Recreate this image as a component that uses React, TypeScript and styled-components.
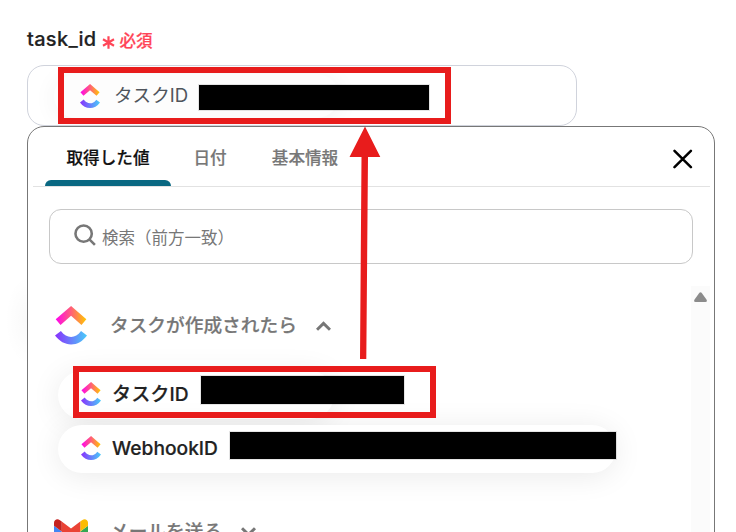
import { useId } from "react";
import styled, { createGlobalStyle } from "styled-components";

const GlobalStyle = createGlobalStyle`
    * {
        box-sizing: border-box;
    }

    body {
        margin: 0;
        background: #fff;
        font-family: Inter, "Noto Sans CJK JP", sans-serif;
    }
`

type PropsIcone = {
    size: number
}

const ClickUpIcon = ({ size }: PropsIcone) => {
    const id = useId();

    return (
        <Icone width={size} height={size * 1.2} viewBox="2 0 20 24">
            <defs>
                <linearGradient id={`${id}top`} x1="0" x2="1" y1="0" y2="0">
                    <stop offset="0" stopColor="#ff02f0" />
                    <stop offset="0.5" stopColor="#ff5f79" />
                    <stop offset="1" stopColor="#ffc800" />
                </linearGradient>
                <linearGradient id={`${id}bottom`} x1="0" x2="1" y1="0" y2="0">
                    <stop offset="0" stopColor="#8930fd" />
                    <stop offset="1" stopColor="#49ccf9" />
                </linearGradient>
            </defs>
            <path fill={`url(#${id}bottom)`} d="M2 18.439l3.69-2.828c1.961 2.56 4.044 3.739 6.363 3.739 2.307 0 4.33-1.166 6.203-3.704L22 18.405C19.298 22.065 15.941 24 12.053 24 8.178 24 4.788 22.078 2 18.439z" />
            <path fill={`url(#${id}top)`} d="M12.04 6.15l-6.568 5.66-3.036-3.52L12.055 0l9.543 8.296-3.05 3.509z" />
        </Icone>
    )
}

const GmailIcon = () => (
    <Icone width="34" height="26" viewBox="52 42 88 66">
        <path fill="#4285f4" d="M58 108h14V74L52 59v43c0 3.32 2.69 6 6 6" />
        <path fill="#34a853" d="M120 108h14c3.32 0 6-2.69 6-6V59l-20 15" />
        <path fill="#fbbc04" d="M120 48v26l20-15v-8c0-7.42-8.47-11.65-14.4-7.2" />
        <path fill="#ea4335" d="M72 74V48l24 18 24-18v26L96 92" />
        <path fill="#c5221f" d="M52 51v8l20 15V48l-5.6-4.2c-5.94-4.45-14.4-.22-14.4 7.2" />
    </Icone>
)

const App = () => {
    return (
        <>
            <GlobalStyle />
            <Page>
                <Label>
                    <Label__Name>task_id</Label__Name>
                    <Icone width="13" height="13" viewBox="0 0 13 13" stroke="#ff4557" strokeWidth="2.2">
                        <path d="M6.5 0.3v12.4M1 3.3l11 6.4M12 3.3L1 9.7" />
                    </Icone>
                    <Label__Required>必須</Label__Required>
                </Label>

                <Field>
                    <Tag $width={285} $height={44} $pad={26} $soft>
                        <ClickUpIcon size={20} />
                        <Tag__Text $light>タスクID</Tag__Text>
                        <Redaction $width={230} $height={25} $gap={11} $lift={-3} />
                    </Tag>
                </Field>

                <Panel>
                    <Tabs>
                        <Tab $width={126} $active>取得した値</Tab>
                        <Tab $width={78}>日付</Tab>
                        <Tab $width={112}>基本情報</Tab>
                        <Close>
                            <Icone width="20" height="20" viewBox="0 0 20 20" stroke="#000" strokeWidth="2.5" strokeLinecap="round">
                                <path d="M1.5 1.8l16.4 16.4M17.9 1.8L1.5 18.2" />
                            </Icone>
                        </Close>
                    </Tabs>

                    <Search>
                        <Icone width="22" height="22" viewBox="0 0 24 24" fill="none" stroke="#777" strokeWidth="2.8">
                            <circle cx="10.5" cy="10.5" r="8.9" />
                            <path d="M16.8 16.8l6 6" />
                        </Icone>
                        <Search__Text>検索（前方一致）</Search__Text>
                    </Search>

                    <Results>
                        <List>
                            <Group>
                                <ClickUpIcon size={32} />
                                <Group__Title>タスクが作成されたら</Group__Title>
                                <Icone width="15" height="10" viewBox="0 0 15 10" fill="none" stroke="#777" strokeWidth="3">
                                    <path d="M1 8.8l6.5-6.4L14 8.8" />
                                </Icone>
                            </Group>
                            <Tag $width={276} $height={48} $pad={23}>
                                <ClickUpIcon size={20} />
                                <Tag__Text>タスクID</Tag__Text>
                                <Redaction $width={203} $height={28} $gap={12} $lift={8} />
                            </Tag>
                            <Tag $width={558} $height={48} $pad={23}>
                                <ClickUpIcon size={20} />
                                <Tag__Text>WebhookID</Tag__Text>
                                <Redaction $width={386} $height={27} $gap={12} $lift={5} />
                            </Tag>
                            <Group $last>
                                <GmailIcon />
                                <Group__Title>メールを送る</Group__Title>
                                <Icone width="15" height="10" viewBox="0 0 15 10" fill="none" stroke="#777" strokeWidth="3">
                                    <path d="M1 1.2l6.5 6.4L14 1.2" />
                                </Icone>
                            </Group>
                        </List>
                        <Scrollbar>
                            <Icone width="13" height="10" viewBox="0 0 13 10" fill="#8b8b8b">
                                <path d="M5.4 0.8q1.1-1.3 2.2 0l5 7q.9 2.1-1.1 2.1h-10q-2 0-1.1-2.1z" />
                            </Icone>
                        </Scrollbar>
                    </Results>
                </Panel>

                <Highlight $left={58} $top={67} $width={393} $height={57} />
                <Highlight $left={73} $top={366} $width={363} $height={52} />
                <Arrow width="32" height="234" viewBox="0 0 32 234" fill="#e81c1c">
                    <path d="M16 0.5L31.3 31H19L17.3 233H11L12.5 31H0.5z" />
                </Arrow>
            </Page>
        </>
    )
}

const Icone = styled.svg`
    display: block;
    flex: none;
`

const Page = styled.main`
    position: relative;
    width: 736px;
    height: 532px;
    padding: 0 21px 0 27px;
    overflow: hidden;
    background: #fff;

    &::before {
        content: "";
        position: absolute;
        left: 5px;
        top: 275px;
        width: 22px;
        height: 90px;
        background: radial-gradient(ellipse at right, rgba(0, 0, 0, .025), transparent 70%);
    }
`

const Label = styled.div`
    display: flex;
    align-items: center;
    height: 65px;
    padding-top: 13px;

    svg {
        margin: 6px 5px 0 5px;
    }
`

const Label__Name = styled.span`
    font-size: 20px;
    font-weight: 500;
    letter-spacing: .3px;
    -webkit-text-stroke: .2px;
    color: #222;
`

const Label__Required = styled.span`
    margin-top: 1px;
    font-size: 16.5px;
    font-weight: 500;
    -webkit-text-stroke: .2px;
    color: #ff4557;
`

const Field = styled.div`
    width: 550px;
    height: 61px;
    padding: 8px 0 0 26px;
    border: 1px solid #d0d3dc;
    border-radius: 17px;
    overflow: hidden;
`

const Tag = styled.div<{ $width: number, $height: number, $pad: number, $soft?: boolean }>`
    display: flex;
    align-items: center;
    flex: none;
    width: ${({ $width }) => $width}px;
    height: ${({ $height }) => $height}px;
    padding-left: ${({ $pad }) => $pad}px;
    padding-bottom: ${({ $soft }) => $soft ? 1 : 2}px;
    border-radius: 24px;
    background: ${({ $soft }) => $soft ? "#fdfdfd" : "#fff"};
    box-shadow: ${({ $soft }) => $soft ? "0 3px 24px rgba(0, 0, 0, .06)" : "0 3px 30px rgba(0, 0, 0, .085)"};
`

const Tag__Text = styled.span<{ $light?: boolean }>`
    flex: none;
    margin-left: ${({ $light }) => $light ? 14 : 11}px;
    margin-bottom: ${({ $light }) => $light ? 2 : 0}px;
    font-size: ${({ $light }) => $light ? 18.6 : 19.2}px;
    font-weight: ${({ $light }) => $light ? 400 : 500};
    line-height: 28px;
    -webkit-text-stroke: ${({ $light }) => $light ? 0 : .2}px;
    color: ${({ $light }) => $light ? "#50555c" : "#222"};
`

const Redaction = styled.span<{ $width: number, $height: number, $gap: number, $lift?: number }>`
    flex: none;
    width: ${({ $width }) => $width}px;
    height: ${({ $height }) => $height}px;
    margin-left: ${({ $gap }) => $gap}px;
    margin-bottom: ${({ $lift = 0 }) => $lift}px;
    background: #000;
    box-shadow: 0 0 0 1px rgba(0, 0, 0, .1);
`

const Panel = styled.section`
    position: relative;
    width: 688px;
    height: 430px;
    padding: 0 4px 0 5px;
    border: 1px solid #777;
    border-radius: 17px;
    background: #fff;
`

const Tabs = styled.nav`
    display: flex;
    height: 60px;
    padding-left: 12px;
    border-bottom: 1px solid #e2e2e2;
`

const Tab = styled.div<{ $width: number, $active?: boolean }>`
    position: relative;
    width: ${({ $width }) => $width}px;
    line-height: 63px;
    text-align: center;
    font-size: 16.6px;
    font-weight: 500;
    -webkit-text-stroke: .2px;
    color: ${({ $active }) => $active ? "#111" : "#777"};

    &::after {
        content: "";
        display: ${({ $active }) => $active ? "block" : "none"};
        position: absolute;
        bottom: 0;
        left: 0;
        right: 0;
        height: 6px;
        border-radius: 6px 6px 0 0;
        background: #096882;
    }
`

const Close = styled.div`
    margin: 22px 17px 0 auto;
`

const Search = styled.div`
    display: flex;
    align-items: center;
    width: 644px;
    height: 55px;
    margin: 22px 0 0 16px;
    padding-left: 24px;
    border: 1px solid #c8c8c8;
    border-radius: 12px;

    svg {
        margin-bottom: 3px;
    }
`

const Search__Text = styled.span`
    margin-left: 6px;
    font-size: 16.5px;
    color: #777;
`

const Results = styled.div`
    display: flex;
    height: 246px;
    margin-top: 22px;
    overflow: hidden;
`

const List = styled.div`
    display: flex;
    flex: 1;
    flex-direction: column;
    gap: 6px;
    padding-left: 25px;
`

const Group = styled.div<{ $last?: boolean }>`
    display: flex;
    align-items: center;
    flex: none;
    height: 79px;
    margin-left: ${({ $last }) => $last ? -4 : -3}px;
    margin-top: ${({ $last }) => $last ? 13 : 0}px;

    & > svg:first-child {
        margin-right: ${({ $last }) => $last ? 22 : 23}px;
    }
`

const Group__Title = styled.h2`
    margin: 0 19px 4px 0;
    font-size: 18.7px;
    font-weight: 500;
    -webkit-text-stroke: .2px;
    color: #777;
`

const Scrollbar = styled.div`
    display: flex;
    justify-content: center;
    width: 19px;
    padding-top: 6px;
    background: #fbfbfb;
`

const Highlight = styled.div<{ $left: number, $top: number, $width: number, $height: number }>`
    position: absolute;
    left: ${({ $left }) => $left}px;
    top: ${({ $top }) => $top}px;
    width: ${({ $width }) => $width}px;
    height: ${({ $height }) => $height}px;
    border: 6px solid #e81c1c;
`

const Arrow = styled.svg`
    position: absolute;
    left: 349px;
    top: 126px;
`

export default App;
